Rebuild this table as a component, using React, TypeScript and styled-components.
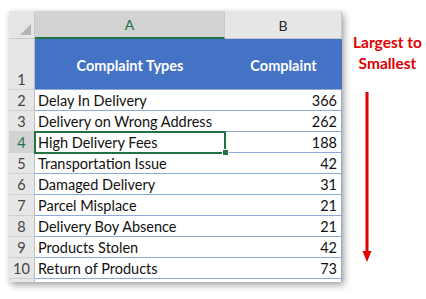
import React from 'react';
import styled, { createGlobalStyle } from 'styled-components';

const GlobalStyle = createGlobalStyle`
  html, body {
    margin: 0;
    padding: 0;
    background: #ffffff;
  }
  body {
    font-family: Lato, "Liberation Sans", sans-serif;
  }
`;

const rows: { label: string; value: number }[] = [
    { label: 'Delay In Delivery', value: 366 },
    { label: 'Delivery on Wrong Address', value: 262 },
    { label: 'High Delivery Fees', value: 188 },
    { label: 'Transportation Issue', value: 42 },
    { label: 'Damaged Delivery', value: 31 },
    { label: 'Parcel Misplace', value: 21 },
    { label: 'Delivery Boy Absence', value: 21 },
    { label: 'Products Stolen', value: 42 },
    { label: 'Return of Products', value: 73 },
];

const ACTIVE_ROW = 4;

const Page = styled.div`
  display: flex;
  align-items: flex-start;
  padding: 11px 0 0 9px;
  width: 426px;
  height: 299px;
  box-sizing: border-box;
`;

const Sheet = styled.div`
  flex: none;
  display: grid;
  grid-template-columns: 26px 190px 117px;
  grid-template-rows: 28px 51px repeat(9, 21px) 3px;
  background: #ffffff;
  box-shadow: 2px 3px 7px rgba(0, 0, 0, 0.38);
`;

const Corner = styled.div`
  position: relative;
  background: #e6e6e6;
  border-right: 1px solid #c8c8c8;
  border-bottom: 1px solid #c8c8c8;
  box-sizing: border-box;

  &::after {
    content: '';
    position: absolute;
    right: 3px;
    bottom: 3px;
    border-style: solid;
    border-width: 0 0 11px 11px;
    border-color: transparent transparent #b4b4b4 transparent;
  }
`;

const ColHead = styled.div<{ $active?: boolean }>`
  display: flex;
  align-items: flex-end;
  justify-content: center;
  padding-bottom: 4px;
  box-sizing: border-box;
  font-size: 14px;
  color: ${(p) => (p.$active ? '#1e6b41' : '#262626')};
  background: ${(p) => (p.$active ? '#d2d2d2' : '#e6e6e6')};
  border-right: 1px solid #c8c8c8;
  border-bottom: ${(p) => (p.$active ? '2px solid #217346' : '1px solid #c8c8c8')};
`;

const RowHead = styled.div<{ $active?: boolean; $bottom?: boolean }>`
  display: flex;
  align-items: ${(p) => (p.$bottom ? 'flex-end' : 'center')};
  justify-content: center;
  padding-bottom: ${(p) => (p.$bottom ? '1px' : '0')};
  box-sizing: border-box;
  font-size: 14.5px;
  color: ${(p) => (p.$active ? '#217346' : '#444444')};
  background: ${(p) => (p.$active ? '#d2d2d2' : '#e6e6e6')};
  border-right: 1px solid #c0c0c0;
  border-bottom: 1px solid #d0d0d0;
`;

const TitleCell = styled.div`
  display: flex;
  align-items: center;
  justify-content: center;
  padding-top: 3px;
  box-sizing: border-box;
  background: #4472c4;
  color: #ffffff;
  font-weight: 700;
  font-size: 14.5px;
  border-bottom: 1px solid #8ea9db;
`;

const Cell = styled.div<{ $num?: boolean; $last?: boolean; $selected?: boolean }>`
  position: relative;
  display: flex;
  align-items: flex-end;
  justify-content: ${(p) => (p.$num ? 'flex-end' : 'flex-start')};
  padding: 0 ${(p) => (p.$num ? '4px' : '3px')} 1px 3px;
  box-sizing: border-box;
  font-size: 14.5px;
  color: #111111;
  white-space: nowrap;
  border-bottom: 1px solid #8ea9db;
  border-right: ${(p) => (p.$last ? '1px solid #8ea9db' : 'none')};
  outline: ${(p) => (p.$selected ? '2px solid #217346' : 'none')};
  outline-offset: -1px;
  z-index: ${(p) => (p.$selected ? 1 : 0)};
`;

const FillHandle = styled.span`
  position: absolute;
  right: -4px;
  bottom: -4px;
  width: 5px;
  height: 5px;
  background: #217346;
  border: 1px solid #ffffff;
`;

const Spacer = styled.div<{ $head?: boolean; $last?: boolean }>`
  background: ${(p) => (p.$head ? '#e6e6e6' : '#ffffff')};
  border-right: ${(p) => (p.$head ? '1px solid #c0c0c0' : p.$last ? '1px solid #8ea9db' : 'none')};
`;

const Note = styled.div`
  display: flex;
  flex-direction: column;
  align-items: flex-start;
  margin-left: 11px;
  padding-top: 21px;
`;

const NoteText = styled.div`
  color: #e00000;
  font-weight: 700;
  font-size: 15.5px;
  line-height: 21px;
  text-align: center;
  white-space: nowrap;
`;

const Arrow = styled.svg`
  display: block;
  margin-top: 18px;
  margin-left: 8px;
`;

const App: React.FC = () => {
    return (
        <>
            <GlobalStyle />
            <Page>
                <Sheet>
                    <Corner />
                    <ColHead $active>A</ColHead>
                    <ColHead>B</ColHead>

                    <RowHead $bottom>1</RowHead>
                    <TitleCell>Complaint Types</TitleCell>
                    <TitleCell>Complaint</TitleCell>

                    {rows.map((row, i) => {
                        const n = i + 2;
                        const selected = n === ACTIVE_ROW;
                        return (
                            <React.Fragment key={row.label}>
                                <RowHead $active={selected}>{n}</RowHead>
                                <Cell $selected={selected}>
                                    {row.label}
                                    {selected && <FillHandle />}
                                </Cell>
                                <Cell $num $last>
                                    {row.value}
                                </Cell>
                            </React.Fragment>
                        );
                    })}

                    <Spacer $head />
                    <Spacer />
                    <Spacer $last />
                </Sheet>

                <Note>
                    <NoteText>
                        Largest to
                        <br />
                        Smallest
                    </NoteText>
                    <Arrow width="12" height="170" viewBox="0 0 12 170">
                        <line x1="6" y1="0" x2="6" y2="160" stroke="#e00000" strokeWidth="3" />
                        <polygon points="1.5,159 10.5,159 6,170" fill="#e00000" />
                    </Arrow>
                </Note>
            </Page>
        </>
    );
};

export default App;
